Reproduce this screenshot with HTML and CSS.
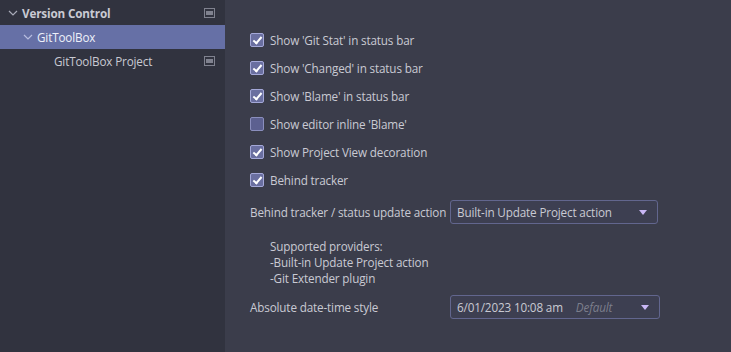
FILE: index.html
```html
<!DOCTYPE html>
<html lang="en">
<head>
  <meta charset="UTF-8" />
  <title>GitToolBox Settings</title>
  <link rel="stylesheet" href="styles.css">
</head>
<body>
  <div class="sidebar">
    <div class="tree-row">
      <span class="chev"><svg width="10" height="10" viewBox="0 0 10 10"><path d="M1 3 L5 7 L9 3" fill="none" stroke="#a9abb8" stroke-width="1.2"/></svg></span>
      <span class="tree-label bold">Version Control</span>
      <span class="proj-icon"><svg width="11" height="10" viewBox="0 0 11 10"><rect x="0.5" y="0.5" width="10" height="9" fill="none" stroke="#80828f"/><rect x="2" y="3" width="7" height="4" fill="#80828f"/></svg></span>
    </div>
    <div class="tree-row selected level1">
      <span class="chev"><svg width="10" height="10" viewBox="0 0 10 10"><path d="M1 3 L5 7 L9 3" fill="none" stroke="#b8bde0" stroke-width="1.2"/></svg></span>
      <span class="tree-label">GitToolBox</span>
    </div>
    <div class="tree-row level2">
      <span class="tree-label">GitToolBox Project</span>
      <span class="proj-icon"><svg width="11" height="10" viewBox="0 0 11 10"><rect x="0.5" y="0.5" width="10" height="9" fill="none" stroke="#80828f"/><rect x="2" y="3" width="7" height="4" fill="#80828f"/></svg></span>
    </div>
  </div>

  <div class="content">
    <div class="options">
      <label class="check-row"><span class="box checked"></span>Show 'Git Stat' in status bar</label>
      <label class="check-row"><span class="box checked"></span>Show 'Changed' in status bar</label>
      <label class="check-row"><span class="box checked"></span>Show 'Blame' in status bar</label>
      <label class="check-row"><span class="box"></span>Show editor inline 'Blame'</label>
      <label class="check-row"><span class="box checked"></span>Show Project View decoration</label>
      <label class="check-row"><span class="box checked"></span>Behind tracker</label>
    </div>

    <div class="field-row first">
      <span class="field-label">Behind tracker / status update action</span>
      <div class="combo">
        <span class="combo-value">Built-in Update Project action</span>
        <span class="arrow"></span>
      </div>
    </div>

    <div class="note">
      Supported providers:<br>
      -Built-in Update Project action<br>
      -Git Extender plugin
    </div>

    <div class="field-row">
      <span class="field-label">Absolute date-time style</span>
      <div class="combo wide">
        <span class="combo-value">6/01/2023 10:08 am</span>
        <span class="hint">Default</span>
        <span class="arrow"></span>
      </div>
    </div>
  </div>
</body>
</html>
```

FILE: styles.css
```css
* { margin: 0; padding: 0; box-sizing: border-box; }
html, body { width: 100%; height: 100%; }
body {
  display: flex;
  font-family: 'Open Sans', 'Noto Sans', sans-serif;
  font-size: 11.7px;
  letter-spacing: -0.15px;
  color: #c9cad3;
  background-color: #3b3d4b;
  overflow: hidden;
}

.sidebar {
  width: 225px;
  flex-shrink: 0;
  background-color: #31333f;
  padding-top: 1px;
}
.tree-row {
  display: flex;
  align-items: center;
  height: 24px;
  padding-left: 8px;
  padding-right: 10px;
}
.tree-row.level1 { padding-left: 23px; }
.tree-row.level2 { padding-left: 54px; }
.tree-row.selected { background-color: #6670a6; color: #eef0fa; }
.chev { width: 14px; display: flex; align-items: center; }
.tree-label { flex: 1; white-space: nowrap; }
.bold { font-weight: 700; }
.proj-icon { display: flex; align-items: center; }

.content {
  flex: 1;
  padding: 26px 0 0 25px;
}
.options { display: flex; flex-direction: column; }
.check-row {
  display: flex;
  align-items: center;
  height: 28px;
  gap: 6px;
}
.box {
  width: 14px; height: 14px;
  border: 1px solid #8a8ebd;
  border-radius: 2px;
  background-color: #5c6090;
  position: relative;
}
.box.checked { background-color: #6a6fa0; border-color: #a4a8d8; }
.box.checked::after {
  content: "";
  position: absolute;
  left: 4px; top: 1px;
  width: 3px; height: 7px;
  border: solid #ffffff;
  border-width: 0 2px 2px 0;
  transform: rotate(40deg);
}

.field-row {
  display: flex;
  align-items: center;
  height: 24px;
}
.field-row.first { margin-top: 6px; }
.field-label { width: 200px; white-space: nowrap; }
.combo {
  display: flex;
  align-items: center;
  width: 208px;
  height: 24px;
  border: 1px solid #62668e;
  border-radius: 3px;
  background-color: #3d3f51;
  padding: 0 10px 0 6px;
}
.combo.wide { width: 210px; }
.combo-value { flex: 1; white-space: nowrap; }
.combo.wide .combo-value { flex: 0 0 auto; margin-right: 13px; }
.hint { flex: 1; font-style: italic; color: #7c7e8c; }
.arrow {
  width: 0; height: 0;
  border-left: 4.5px solid transparent;
  border-right: 4.5px solid transparent;
  border-top: 5px solid #c9b7f5;
}

.note {
  padding: 14px 0 9px 20px;
  line-height: 16px;
}
```
